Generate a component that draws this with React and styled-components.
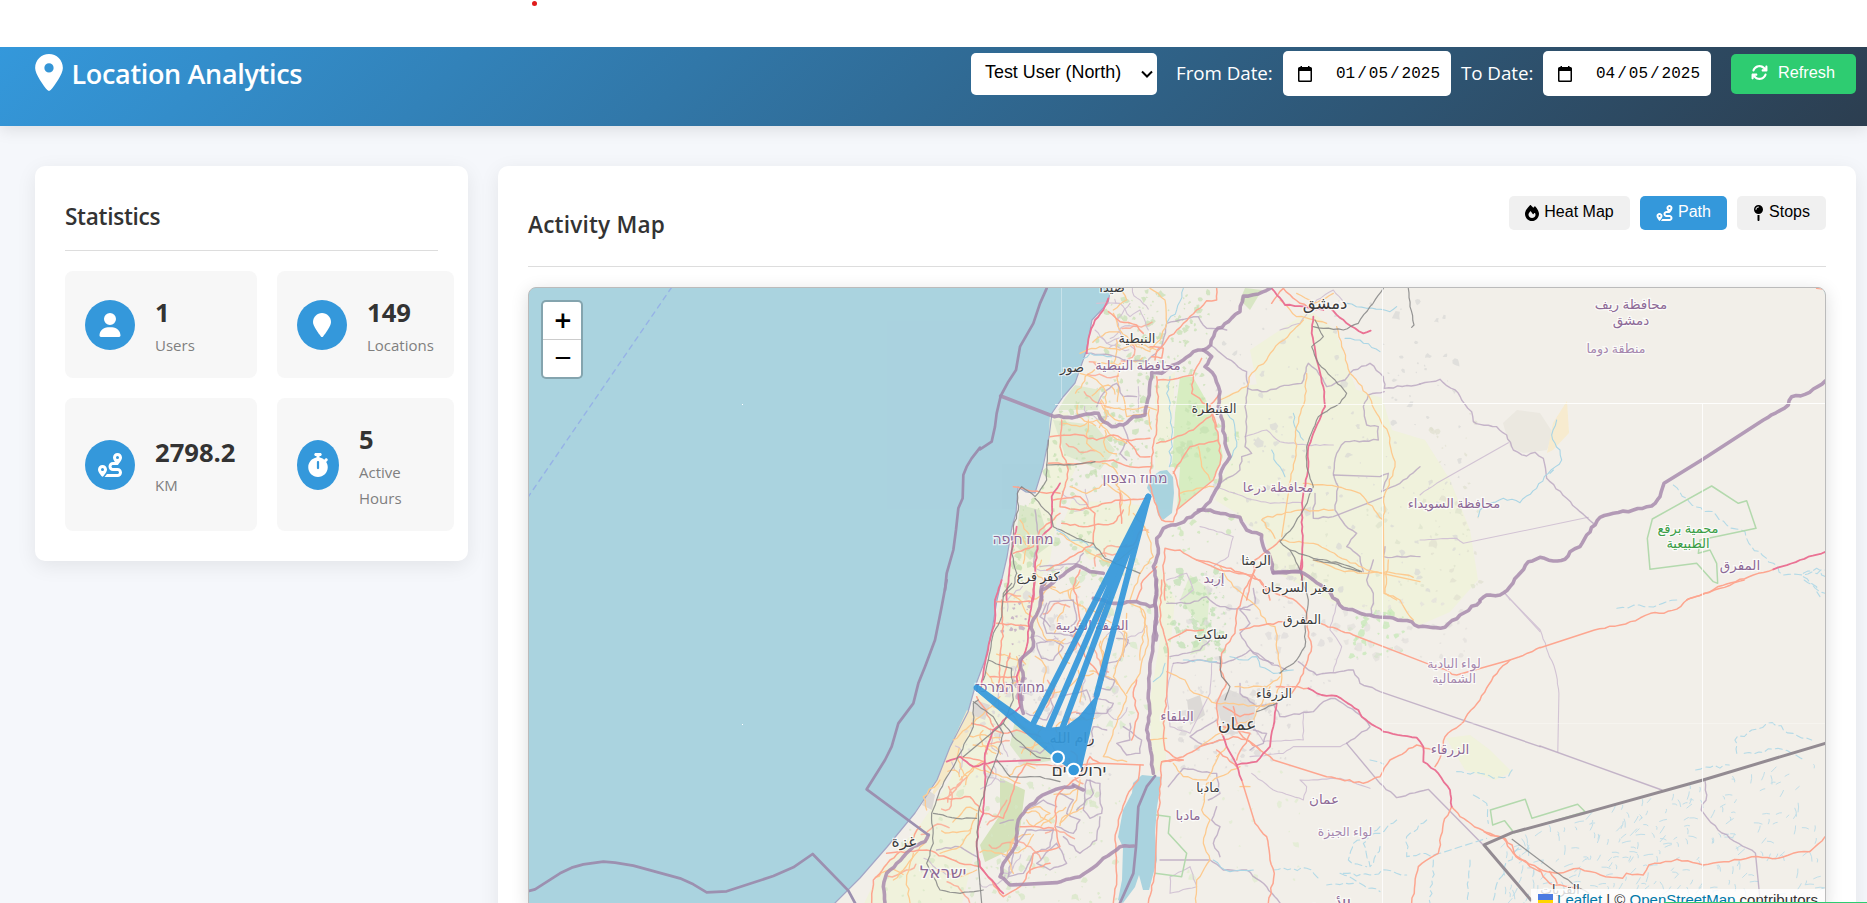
import React from 'react';
import styled, { createGlobalStyle, css } from 'styled-components';
import {
  FaLocationDot, FaLocationPin, FaUser, FaRoute, FaStopwatch, FaArrowsRotate, FaFire, FaMapPin,
} from 'react-icons/fa6';

const ui = '"Segoe UI", "Open Sans", "Noto Sans", sans-serif';
const control = 'Arial, "Liberation Sans", sans-serif';

const GlobalStyle = createGlobalStyle`
  *, *::before, *::after { box-sizing: border-box; }
  html, body { margin: 0; padding: 0; overflow: hidden; background: #f5f7fb; }
  body { font-family: ${ui}; color: #333; line-height: 1.6; }
`;

/* ---------- page frame ---------- */

const Page = styled.div`
  position: relative;
  display: flex;
  flex-direction: column;
  width: 1867px;
  height: 903px;
  overflow: hidden;
  background: #f5f7fb;
`;

const TopStrip = styled.div`
  position: relative;
  z-index: 1;
  flex: none;
  height: 47px;
  padding-left: 532px;
  background: #fff;
`;

const RecordDot = styled.div`
  width: 5px;
  height: 5px;
  margin-top: 1px;
  border-radius: 50%;
  background: #e01b1b;
`;

const Header = styled.header`
  flex: none;
  display: flex;
  align-items: center;
  justify-content: space-between;
  height: 79px;
  padding: 0 11px 26px 35px;
  color: #fff;
  background: linear-gradient(135deg, #3498db, #2c3e50);
  box-shadow: 0 4px 15px rgba(0, 0, 0, 0.1);
`;

const Brand = styled.div`
  display: flex;
  align-items: center;
  gap: 8.5px;
  svg { width: 28px; height: 37px; margin-top: -2px; }
`;

const BrandName = styled.h1`
  margin: 0;
  font-size: 27px;
  font-weight: 600;
  line-height: 40px;
  letter-spacing: -0.33px;
`;

const Controls = styled.div`
  display: flex;
  align-items: center;
`;

const SelectBox = styled.div`
  display: flex;
  align-items: center;
  justify-content: space-between;
  width: 186px;
  height: 42px;
  margin-right: 19px;
  padding: 0 4px 2px 14px;
  border-radius: 5px;
  background: #fff;
  color: #000;
  font: 17.9px ${control};
  svg { width: 12px; height: 8px; margin-top: 3px; }
`;

const FieldLabel = styled.label`
  width: ${(p) => p.$width}px;
  font-size: 18.8px;
  letter-spacing: -0.05px;
  white-space: nowrap;
`;

const DateBox = styled.div`
  display: flex;
  align-items: center;
  justify-content: space-between;
  width: 168px;
  height: 45px;
  margin-right: ${(p) => p.$after}px;
  padding: 0 11px 0 15px;
  border-radius: 5px;
  background: #fff;
  color: #000;
  font: 16px "Liberation Mono", monospace;
  svg { width: 14px; height: 16px; }
`;

const DateParts = styled.span`
  display: flex;
  gap: 2px;
`;

const RefreshButton = styled.button`
  display: flex;
  align-items: center;
  gap: 10px;
  width: 125px;
  height: 40px;
  padding: 0 20px 2px;
  border: 0;
  border-radius: 5px;
  background: #2ecc71;
  color: #fff;
  font: 16.3px ${control};
  svg { width: 17px; height: 17px; }
`;

const Main = styled.main`
  display: grid;
  grid-template-columns: 433px 1358px;
  gap: 30px;
  align-items: start;
  padding: 40px 11px 0 35px;
`;

const Card = styled.section`
  padding: 30px;
  border-radius: 10px;
  background: #fff;
  box-shadow: 0 5px 20px rgba(0, 0, 0, 0.08);
`;

const CardHead = styled.div`
  display: flex;
  justify-content: space-between;
  height: ${(p) => p.$height}px;
  margin-bottom: 20px;
  border-bottom: 1px solid #ddd;
`;

const CardTitle = styled.h2`
  margin: 0;
  font-size: 22.6px;
  font-weight: 600;
  line-height: ${(p) => p.$line}px;
  letter-spacing: ${(p) => p.$tracking}px;
`;

/* ---------- statistics ---------- */

const StatGrid = styled.div`
  display: grid;
  grid-template-columns: 192px 177px;
  grid-template-rows: 107px 133px;
  gap: 20px;
`;

const StatItem = styled.div`
  display: flex;
  align-items: center;
  gap: 20px;
  padding: 20px;
  border-radius: 8px;
  background: #f7f7f7;
`;

const StatIcon = styled.div`
  flex: none;
  display: flex;
  align-items: center;
  justify-content: center;
  width: ${(p) => p.$width || 50}px;
  height: 50px;
  border-radius: 50%;
  background: #3498db;
  color: #fff;
  svg { width: 24px; height: 24px; }
`;

const StatValue = styled.div`
  font-size: 25.6px;
  font-weight: 700;
  line-height: 41px;
  padding-top: 1px;
  margin-bottom: -1px;
`;

const StatLabel = styled.div`
  color: #7f7f7f;
  font-size: 15px;
  line-height: 26px;
`;

/* ---------- map ---------- */

const ModeButtons = styled.div`
  display: flex;
  gap: 10px;
`;

const ModeButton = styled.button`
  display: flex;
  align-items: center;
  justify-content: center;
  gap: 5px;
  width: ${(p) => p.$width}px;
  height: 34px;
  padding: 0 0 2px;
  border: 0;
  border-radius: 5px;
  background: ${(p) => (p.$active ? '#3498db' : '#f0f0f0')};
  color: ${(p) => (p.$active ? '#fff' : '#000')};
  font: 16px ${control};
  svg { height: 16px; width: ${(p) => p.$icon}px; margin-top: 2px; }
`;

const MapFrame = styled.div`
  position: relative;
  height: 624px;
  border: 1px solid #bbb;
  border-radius: 8px;
  overflow: hidden;
  background: #aad3df;
`;

const MapShadow = styled.div`
  border-radius: 8px;
  box-shadow: 0 4px 18px rgba(0, 0, 0, 0.14);
`;

const MapCanvas = styled.svg`
  display: block;
  path { fill: none; vector-effect: non-scaling-stroke; stroke-linejoin: round; stroke-linecap: round; }
`;

const strokes = {
  nation: css`stroke: #a98cae; stroke-width: 3.6; opacity: 0.85;`,
  maritime: css`stroke: #9c90b0; stroke-width: 2.7;`,
  desert: css`stroke: #938b92; stroke-width: 3;`,
  region: css`stroke: #b9a6c1; stroke-width: 1.4; opacity: 0.8;`,
  thin: css`stroke: #d2c3d4; stroke-width: 1.1;`,
  primary: css`stroke: #fda690; stroke-width: 1.5;`,
  secondary: css`stroke: #fdca8f; stroke-width: 1.3;`,
  motorway: css`stroke: #ea7294; stroke-width: 1.8;`,
  rail: css`stroke: #858585; stroke-width: 1.2; opacity: 0.85;`,
  river: css`stroke: #a9d5e5; stroke-width: 1.1;`,
  stream: css`stroke: #b9dce8; stroke-width: 1; opacity: 0.85;`,
  wadi: css`stroke: #b4dae7; stroke-width: 1.1; stroke-dasharray: 7 4;`,
  ferry: css`stroke: #96b2e6; stroke-width: 1.4; stroke-dasharray: 5 5;`,
  park: css`stroke: #b3d9ad; stroke-width: 1.5;`,
};

const Line = styled.path`${(p) => strokes[p.$kind]}`;

const Area = styled.polygon`
  fill: ${(p) => p.$fill};
  opacity: ${(p) => p.$opacity || 1};
`;

const tones = { town: '#3c3c3c', region: '#8d6996', district: '#a688ae', park: '#3a9d45' };

const PlaceName = styled.text`
  font-family: "Noto Sans", "DejaVu Sans", sans-serif;
  font-size: ${(p) => p.$size}px;
  fill: ${(p) => tones[p.$tone]};
  stroke: rgba(255, 255, 255, 0.7);
  stroke-width: 2.4px;
  paint-order: stroke;
  text-anchor: middle;
`;

const ZoomControl = styled.div`
  position: absolute;
  left: 12px;
  top: 12px;
  width: 42px;
  border: 2px solid rgba(0, 0, 0, 0.22);
  border-radius: 5px;
  background-clip: padding-box;
  background-color: #fff;
`;

const ZoomButton = styled.div`
  height: ${(p) => (p.$first ? 38 : 37)}px;
  padding-left: 2px;
  border-bottom: ${(p) => (p.$first ? '1px solid #ccc' : '0')};
  color: #000;
  font: ${(p) => (p.$first ? 'bold 23px/36px' : '23px/35px')} "DejaVu Sans", sans-serif;
  text-align: center;
`;

const Attribution = styled.div`
  position: absolute;
  right: 0;
  bottom: 0;
  display: flex;
  align-items: center;
  gap: 4px;
  height: 21px;
  padding: 0 7px;
  background: rgba(255, 255, 255, 0.8);
  color: #333;
  font: 15px/21px ${control};
  white-space: pre;
  svg { width: 15px; height: 10px; margin-top: -1px; }
`;

const MapLink = styled.span`color: #0078a8;`;

const BottomAccent = styled.div`
  position: absolute;
  right: 0;
  bottom: 0;
  width: 203px;
  height: 1px;
  background: #2ecc71;
`;

/* ---------- map geometry ---------- */

function random(seed) {
  let s = seed;
  return () => {
    s = (s * 1664525 + 1013904223) % 4294967296;
    return s / 4294967296;
  };
}

const jitter = { nation: 3, region: 3, thin: 2, primary: 3, secondary: 3.5, motorway: 2, rail: 2, river: 5, wadi: 6 };

/* Turns a list of points into a path whose segments meander slightly. */
function meander(points, kind, seed) {
  const rnd = random(seed);
  const amp = jitter[kind] || 0;
  const pts = points.trim().split(' ').map((q) => q.split(',').map(Number));
  let d = `M${pts[0]}`;
  for (let i = 1; i < pts.length; i += 1) {
    const [ax, ay] = pts[i - 1];
    const [bx, by] = pts[i];
    const len = Math.hypot(bx - ax, by - ay);
    const n = amp && len < 130 ? Math.max(1, Math.round(len / 14)) : 1;
    for (let k = 1; k <= n; k += 1) {
      const t = k / n;
      const off = k < n ? (rnd() - 0.5) * 2 * amp : 0;
      const x = ax + (bx - ax) * t - ((by - ay) / len) * off;
      const y = ay + (by - ay) * t + ((bx - ax) / len) * off;
      d += `L${x.toFixed(1)} ${y.toFixed(1)}`;
    }
  }
  return d;
}

const sheets = [
  {
    name: 'northwest sea', place: 'translate(520 270) scale(.33333)', lines: {
      ferry: ['455,52 25,680'],
      maritime: ['1380,533 1355,565 1340,590 1330,615 1328,685 1315,715 1308,780 1300,840 1280,910 1275,960'],
    },
  },
  {
    name: 'southwest sea', place: 'translate(520 580) scale(.33333)', lines: {
      maritime: ['27,933 45,928 120,880 155,863 190,853 250,845 285,848 340,857 480,895 520,913 560,937 620,934 760,888 820,862 878,822 985,932 1005,969'],
    },
  },
  {
    name: 'north', place: 'translate(980 280) scale(.33333)', lines: {
      region: [
        '692,195 740,235 800,275 803,325 860,335 900,320 965,310 985,250 1010,270 1040,320 1095,300 1120,270 1170,250 1210,290 1213,325 1320,312',
        '803,325 795,380 800,440 795,500 815,520 785,530 780,570 720,610',
        '1213,335 1165,345 1150,380 1160,435 1195,440 1195,480 1095,485 1070,520 1060,580 1075,620 1065,690 1095,735 1130,760 1100,800 1140,830 1150,875',
        '320,220 390,225 430,240 500,245 545,200 560,130 600,120 655,110 680,145 740,150',
        '1213,650 1060,710 1000,715 1005,640', '1215,800 1210,830 1320,830', '1060,585 1200,590 1225,580 1205,635 1260,610 1320,560',
        '350,380 370,340 410,310 430,350 470,350', '430,440 445,480 420,520 440,540',
        '180,860 240,855 290,850 310,820', '165,690 175,780 160,860',
      ],
      thin: [
        '795,470 860,450 900,485 980,495 1060,495', '720,625 800,655 870,670 965,668',
        '660,740 700,750 760,770 745,830 700,860', '560,900 620,880 640,930 600,960',
        '450,70 410,120 425,170 380,190 345,150', '1100,80 1060,30 1010,60 960,130 900,150',
        '475,320 475,390', '350,70 420,70 450,110 480,90 505,150',
      ],
      river: ['395,230 330,220 300,250', '570,290 560,340 572,400 575,470 568,560', '1095,175 1140,180 1200,215', '1100,70 1160,85 1230,95 1250,80',
        '875,510 890,550 915,590', '940,400 950,450 970,480', '720,390 760,420 770,500 750,540', '230,750 270,780 320,790 350,810', '560,130 590,90 610,25'],
      secondary: [
        '970,120 930,160 880,210 860,240 815,280 800,320 720,360',
        '1070,140 1085,200 1110,280 1160,340 1190,400 1225,460 1245,560 1215,640 1210,720 1212,940 1250,960',
        '980,280 975,360 950,440 945,540 925,640 905,770', '970,610 1070,620 1140,640 1210,720',
        '1060,690 960,690 850,715 845,720 885,775', '900,780 1000,790 1100,840 1160,870 1320,905',
        '510,25 555,60 560,130 540,180 510,210', '300,280 350,300 380,340 375,380 430,390 500,380 530,390',
        '325,420 320,490 370,530', '430,350 440,410 500,400', '655,500 665,560 690,600', '600,640 650,625 700,620', '270,620 320,640 380,610 420,640',
        '250,430 300,440 350,420 400,470 440,490', '460,700 500,750 520,830 480,880 450,960', '240,760 330,820 400,850 470,800', '120,720 150,770 130,850',
        '300,220 360,200 420,210 470,190 530,210', '420,25 440,60 400,90', '900,60 950,110 1040,130', '950,40 1000,70 1060,40', '400,100 420,150 470,200 510,215',
      ],
      primary: [
        '385,95 420,125 470,135 490,160', '710,25 710,60 680,62 610,130 560,180 530,215 525,240',
        '530,290 535,380 530,450 515,530 510,600 520,650 545,720 580,725 600,660 590,600 580,575', '535,300 580,298 640,285 665,235',
        '640,290 635,340 680,375 690,380 715,470 722,540 700,600 590,690', '530,490 580,475 640,450 700,400', '580,580 630,500 715,480',
        '210,470 300,465 350,480 400,465 440,480 510,475', '205,550 280,552 345,545 400,540 450,560 515,560',
        '245,420 240,500 265,570 255,620 240,680 300,690 420,660 500,655', '220,660 300,650 345,700 340,790 260,840 200,870',
        '555,960 550,870 555,805 600,810 650,840 700,850 790,880 840,900 870,960', '900,780 880,800 825,840 820,880 800,960',
        '100,820 160,800 180,750 240,700', '245,730 310,740 400,730 430,690', '420,640 425,730', '300,870 280,920 290,960', '440,480 480,530 510,530',
        '720,340 690,375 710,440', '510,200 550,205 545,235 515,230', '875,70 910,25 960,70 1010,90', '100,620 200,640 240,640', '530,860 490,900 470,960',
      ],
      motorway: ['385,55 370,90 345,120 330,160 320,220', '875,25 915,75 975,80 1030,90', '1050,85 1100,130 1150,160 1172,152',
        '1000,110 995,160 1010,240 1030,320 1035,380 1000,460 985,500 985,560 970,640 965,700 968,780 965,900', '240,610 215,650 215,740 175,780 165,860 160,960', '110,740 90,840 80,960'],
      rail: ['1210,25 1170,80 1135,130 1090,150 1030,145 1000,140', '1285,25 1290,80 1302,135 1295,142',
        '1005,120 1030,170 995,200 1015,250 1065,300 1100,340 1080,370 1015,410 980,500 980,560 1000,620 975,680 940,740 900,785 930,810 1000,835 1080,850 1145,875',
        '205,480 200,555 280,555 345,545', '200,555 200,600 165,650 125,620 112,640 115,690 100,740 95,820 110,880 100,920 70,950', '165,655 215,710 220,740 290,775 340,790 375,835 420,855 480,880', '930,810 960,870'],
      nation: [
        '870,25 835,42 790,48 780,95 745,125 705,155 692,195 670,210 640,215 610,240 565,265 545,280 515,278 508,330 500,375 495,405 460,410 430,435 395,440 370,425 355,400 320,402 290,410 250,412 210,405 62,348',
        '670,210 695,230 675,260 705,290 720,335 715,380 730,440 735,490 750,530 725,570 715,620 690,665 655,695 600,730 550,745 530,775 535,820 520,860 530,900 527,960 528,1080',
        '655,690 690,690 720,700 780,712 800,750 845,765 850,800 870,830 880,878',
        '185,960 185,930 210,915 250,885 290,855 330,875 370,880',
      ],
      maritime: ['200,25 180,70 160,130 120,200 108,270 85,305 62,348 50,400 45,440 35,485 0,508'],
    },
  },
  {
    name: 'northeast', place: 'translate(1420 280) scale(.33333)', lines: {
      thin: ['265,488 50,610 0,645', '505,712 130,790 110,775 0,780', '255,940 270,960'],
      river: ['410,420 395,465 420,510 425,540 385,580 350,625 300,668 250,655 180,690 175,710', '390,580 400,570'],
      wadi: ['760,615 800,655 850,695 880,695 920,735 975,755 995,800 1060,850 1090,885 1150,885 1217,870', '1150,890 1190,920 1200,950', '1150,880 1190,865 1217,890'],
      park: ['697,717 875,618 955,670 980,662 1008,745 840,780 835,820 870,810 890,850 893,910 880,905 830,850 690,868 682,775 697,717'],
      primary: ['800,960 920,912 1000,885 1060,868', '1190,25 1217,30'],
      motorway: ['1060,868 1140,840 1217,815'],
      region: ['0,312 60,298 115,340 125,360 155,395 160,425 180,433 230,440 260,465 280,510 320,528 345,517 370,535 380,595 440,655 480,695 520,730'],
      nation: ['180,960 200,945 240,945 270,920 325,845 360,832 400,843 435,838 450,815 480,800 500,765 540,712 580,700 640,690 695,678 720,650 732,610 845,540 1030,420 1105,375 1115,350 1155,343 1217,302'],
    },
  },
  {
    name: 'centre', place: 'translate(860 580) scale(.33333)', lines: {
      region: [
        '570,65 640,60 650,120 620,150 640,170 600,160 560,160 550,130 570,65', '530,190 580,180 610,200 580,240 545,235 530,190',
        '680,600 720,610 725,700 690,715 670,690 680,600', '500,750 580,750 570,800 520,820 490,880 445,890 460,810 500,750', '590,790 620,850 570,870 530,850 590,790',
        '720,710 710,780 660,820 610,770', '790,440 845,480 840,520 800,525 770,490 810,480 810,430', '770,175 805,180 780,240 740,250 735,290 765,300 750,330 715,320',
        '490,340 560,330 580,380 560,420 500,400', '600,350 680,330 700,400 650,400', '700,400 740,400 760,370 700,350', '600,640 640,660 620,700 660,720 640,760 590,740', '500,690 550,660 590,680',
        '650,690 700,640 690,600', '740,450 700,440 690,500', '230,810 300,800 350,830', '420,730 460,720', '560,70 540,110 570,140', '480,500 540,520 560,500',
      ],
      secondary: ['800,100 790,200 760,290 800,350 760,450 730,530 800,545', '740,120 800,160 790,230', '160,820 140,900 150,969', '200,780 130,870 100,900', '420,350 340,430 280,480',
        '500,690 540,680 570,700 520,740 500,720', '550,350 610,330 660,290 700,280', '520,400 560,370 590,300', '300,600 340,560 400,580 480,610', '240,820 300,800 330,760 350,700',
        '440,320 480,300 470,230', '550,60 530,110 560,180 610,190', '660,600 650,660 630,700 600,730', '470,760 440,830 460,880', '200,690 190,650 240,600', '230,870 300,890 350,870',
        '540,10 600,40 660,20', '810,70 850,90 865,180 840,280 800,340', '400,380 450,400 500,450'],
      primary: ['410,65 520,65', '410,130 510,140', '425,60 430,140 420,240 415,320', '450,220 430,300 440,340', '335,430 430,460 470,450 540,470', '230,660 330,650 370,700 430,715 470,600 500,550 590,560 720,550 850,555',
        '35,969 40,900 90,840 150,790 180,740', '80,820 200,810 300,850 360,860 430,950 480,920 510,870 570,850', '840,555 835,600 800,650 775,720 765,780 770,900 760,969', '650,60 660,120 640,170 690,250 730,300',
        '905,0 900,120 925,220 920,350 910,430 915,510 940,530 970,540 905,545 900,640 890,750 885,880 865,969', '640,600 590,650 585,740 600,800 520,820 510,880', '390,290 470,290', '400,440 370,380 350,350',
        '830,300 820,350 835,400 815,480', '720,550 690,530 660,590 630,610', '300,530 370,545 400,580', '480,740 580,745'],
      motorway: ['425,0 405,60 405,120 390,180 375,250 360,330', '525,0 510,100 500,200 470,290 480,380 400,450 375,520 375,620 370,700 355,740 350,800 360,860 430,940', '260,545 300,530 340,560 400,545 540,540'],
      rail: ['455,10 430,40 425,110 400,160 385,240 370,300', '355,360 340,370 340,440 300,520 240,630 215,700 220,790 200,850 240,930 300,940 370,930', '385,240 420,255 455,265 460,360 430,430 310,530',
        '340,365 400,410 430,460 410,530 380,610 355,700 350,800 365,969', '430,430 460,470 530,530 590,540', '220,700 290,715 350,715', '410,540 450,590 540,590 600,605'],
      nation: ['205,765 195,785 160,800 110,850 80,880 70,920 75,969', '560,0 545,20 540,80 515,130 520,200 480,240 490,290 480,340 490,400',
        '640,620 600,625 560,640 510,675 475,720 465,800 430,850 420,890 450,915 590,908 660,890 720,845 780,800 822,798', '670,630 640,615',
        '888,0 885,60 890,110 878,200 870,250 865,340 870,400 860,450 870,500 880,580', '700,55 760,70 830,65 870,80 885,75'],
      maritime: ['260,0 245,80 225,180 195,260 175,310 160,370 115,430 95,500 75,540 20,628 205,765', '885,588 860,620 835,680 828,800 820,880 780,969'],
    },
  },
  {
    name: 'jordan', place: 'translate(1140 560) scale(.33333)', lines: {
      thin: ['330,590 430,580 460,560 600,560 620,550', '490,460 490,540 370,545 340,500', '335,640 400,690 490,720 500,680 480,660 600,655 690,685', '1095,100 1200,215',
        '590,130 570,210 605,260 580,335', '215,310 210,400 150,520 90,500 80,400 100,310', '150,920 170,980 90,1000 90,950 150,920'],
      region: ['475,305 530,345 640,330 660,370 720,395 1200,560', '620,550 690,500 660,465 585,415 550,425 520,455 420,470 400,430', '620,550 720,670 770,713 865,688 1030,855',
        '100,310 180,300 240,310 280,300 330,270 400,310', '340,85 345,130 300,150 330,190 300,220 340,280 370,300 440,330', '60,900 210,900 250,930 320,930 380,980 420,1029', '230,740 215,780 240,800 220,850 240,890',
        '700,0 680,60 700,100 695,160', '85,680 130,625 230,640 240,700 205,720', '80,130 150,130 200,110 240,140 330,150', '230,480 150,530 190,555 240,540', '90,290 180,270 210,240', '300,370 300,400 350,440 400,430', '340,510 380,520 370,550 330,570'],
      river: ['270,290 310,300 350,290 360,320 400,340 460,330', '40,365 60,350 75,310', '130,300 230,305', '220,900 270,935 340,930'],
      wadi: ['950,635 1020,640 1060,655 1105,650 1120,625', '770,780 720,820 640,850 625,900 680,920', '860,780 800,830 800,890 900,880 1040,835', '720,800 670,850 690,920 720,860',
        '400,930 500,925 540,960', '600,940 660,970 720,995', '610,940 690,945 740,930 800,945', '690,600 730,612', '1000,705 1040,730 1045,790', '880,900 870,1029', '990,900 985,1029', '640,970 560,975'],
      secondary: ['240,20 280,80 350,140 380,190 405,200 415,280 425,340 420,380 410,400', '100,610 130,650 200,660 240,580', '300,620 200,670 185,750 210,780 190,850 210,900 170,960 168,1029', '285,380 380,380 420,350',
        '390,380 360,440 330,490', '520,0 600,30 680,40 740,35 820,52', '745,0 735,100 780,120 820,180', '80,335 135,360 150,390 230,430 280,430 370,440 410,430', '30,540 80,535', '0,140 15,190 0,300', '180,560 260,500 330,480', '300,680 330,680', '230,590 260,560'],
      primary: ['305,660 345,790 380,830 390,900 403,940 385,1029', '410,380 460,380 505,385', '540,190 640,225 860,310 950,345 1110,300 1200,262', '1110,300 1060,350 1020,420 960,495 915,530 905,580 885,620',
        '880,570 830,555 750,600 720,650 670,670 560,650 400,600 330,545 280,530 180,560 130,590 65,605', '935,740 960,770 1040,820 1090,835 1120,880 1170,920 1200,935', '935,740 910,790 895,880 835,920 825,970 815,1029',
        '345,30 310,100 290,160 285,220 245,280 240,330 260,370 230,430 235,500 250,530', '170,0 240,30 340,45 385,90 470,125 500,160 505,230 515,260 490,340 455,400', '300,210 370,195 430,185', '85,240 140,210 190,210', '250,500 330,520 290,600', '230,570 290,620', '280,440 300,520 360,570', '340,460 300,470 250,440'],
      motorway: ['485,0 480,30', '410,430 400,500 390,560 350,605 290,615 260,560 250,530', '290,615 305,660', '505,385 545,405 590,408 655,450 665,470 730,515 830,533 850,560 850,605 885,630 930,690 935,740'],
      rail: ['480,35 505,120 495,200 495,260 470,300 420,340', '520,0 580,10 660,35', '410,430 350,455', '240,290 245,350 270,380 255,420'],
      park: ['50,765 90,770 85,820 140,880 125,950 45,940'],
      nation: ['400,38 480,35 520,60 560,90 610,145 690,165 815,185 835,200 915,202 960,165 1020,125'],
    },
  },
  {
    name: 'southeast', place: 'translate(1280 580) scale(.37439 .33333)', lines: {
      thin: ['600,40 695,150 735,270 745,340 742,515'],
      region: ['694,498 1020,630', '1135,600 1140,645 1125,690 1170,750 1270,820 1283,969'],
      park: ['625,758 600,722 568,735 562,690 655,658 673,715 795,673 815,695 625,758'],
      wadi: ['900,85 960,75 1010,75 1060,60', '1220,520 1215,480 1260,450 1315,428 1370,460 1420,480', '1240,520 1330,505 1400,540', '1110,570 1200,555', '570,960 600,860 640,800', '1400,0 1430,25 1456,40'],
      primary: ['695,203 840,150 950,122 990,100 1025,100 1070,80 1090,57 1160,30 1240,0',
        '545,755 590,770 620,795 630,830 690,865 740,880 800,865 870,890 915,895 925,880 970,885 985,855 1060,838 1130,855 1200,845 1260,830 1330,835 1370,820 1415,815 1456,770', '690,865 720,910 790,925', '720,875 740,910'],
      rail: ['620,778 735,875 825,940'],
      desert: ['1456,490 1130,600 810,700 620,758 545,795 670,960'],
    },
  },
];

const drawOrder = ['thin', 'region', 'river', 'wadi', 'park', 'secondary', 'primary', 'motorway', 'rail', 'nation', 'maritime', 'desert', 'ferry'];

const nationJoin = 'M1273.3 572.7L1283 571.7L1300 571.7';

const coast = [
  [1111, 287], [1108, 303], [1092, 320], [1086, 352], [1075, 383], [1063, 397], [1052, 413], [1049, 437], [1043, 467],
  [1035, 493], [1026, 492], [1018, 487], [1016, 513], [1012, 527], [1007, 557], [1000, 587], [997, 600], [992, 630], [985, 660], [975, 687],
  [968, 712], [950, 747], [937, 780], [915, 813], [887, 847], [860, 878], [835, 903],
];

function coastX(y) {
  for (let i = 1; i < coast.length; i += 1) {
    const [x0, y0] = coast[i - 1];
    const [x1, y1] = coast[i];
    if (y >= Math.min(y0, y1) && y <= Math.max(y0, y1) && y0 !== y1) return x0 + ((x1 - x0) * (y - y0)) / (y1 - y0);
  }
  return 835;
}

const landPoints = `${coast.map((c) => c.join(',')).join(' ')} 835,915 1830,915 1830,287`;

const areas = [
  ['#f0f2dc', '1050,415 1068,412 1075,470 1060,500 1050,560 1040,580 1035,640 1020,700 1000,740 985,790 975,850 960,912 860,912 880,870 920,825 950,780 970,720 990,650 1003,590 1018,520 1046,480'],
  ['#f0f2dc', '1215,400 1250,385 1320,378 1382,398 1392,430 1425,440 1450,480 1470,530 1478,580 1450,612 1420,625 1380,612 1340,606 1310,590 1275,572 1265,540 1235,512 1215,500 1230,455'],
  ['#f0f2dc', '1310,310 1335,330 1360,400 1330,420 1260,400 1250,350'],
  ['#f0f2dc', '1155,385 1175,372 1172,430 1168,470 1155,470'],
  ['#f0f2dc', '1156,560 1175,600 1165,700 1166,760 1152,780 1150,700 1160,640'],
  ['#f0f2dc', '1072,500 1140,505 1130,550 1090,560 1060,530'],
  ['#f0f2dc', '1446,738 1470,735 1490,750 1512,772 1495,780 1465,770'],
  ['#d7edc1', '1180,377 1193,377 1210,407 1219,437 1223,457 1213,480 1177,510 1180,467 1172,467 1175,413'],
  ['#dfe9cf', '1075,385 1100,390 1098,410 1058,410 1065,398'],
  ['#dfe9cf', '1053,420 1095,425 1115,450 1100,470 1065,455'],
  ['#dae7c8', '1020,505 1040,510 1050,545 1030,560 1015,545'],
  ['#d4e2ba', '1000,778 1025,790 1020,830 1010,850 985,862 980,845 1000,815'],
  ['#dbe7ca', '1015,720 1040,735 1055,760 1025,765 1010,745'],
  ['#e0eed0', '1190,575 1210,590 1205,650 1190,655 1200,625 1180,600'],
  ['#d8e6c4', '1245,288 1262,290 1250,310 1240,300'],
  ['#ebe8e0', '1503,423 1517,410 1540,413 1553,433 1547,450 1523,453 1510,447'],
  ['#f7eccf', '1567,401 1569,433 1553,450 1547,453 1553,423'],
  ['#f5e9c8', '967,710 978,715 960,750 945,780 930,800 937,780 950,747'],
  ['#dfdcd9', '1215,700 1230,690 1255,700 1255,730 1225,735'],
  ['#dcd9d6', '1187,700 1200,695 1205,715 1190,725'],
  ['#dcd9d6', '928,790 935,795 932,810 922,805'],
  ['#dcd9d6', '975,700 990,705 985,720 972,715'],
  ['#aad3df', '1160,471 1167,470 1173,477 1174,493 1172,513 1163,520 1158,515 1155,500 1147,488 1150,478'],
  ['#aad3df', '1142,775 1162,777 1157,807 1155,833 1157,860 1149,890 1143,890 1139,875 1135,887 1123,903 1118,900 1122,880 1123,847 1118,837 1123,810 1132,793 1133,783'],
];

/* Small vegetation and settlement patches, spread by region. */
const patchRegions = [
  [1050, 290, 1210, 470, 300, '#c6e0b2'], [1000, 470, 1110, 590, 150, '#c6e0b2'], [1210, 300, 1460, 600, 150, '#d9d9d6'], [1170, 420, 1240, 570, 40, '#c9e5b4'],
  [960, 590, 1120, 780, 180, '#dcd8d8'], [880, 780, 1120, 903, 130, '#d6e7c3'], [1165, 570, 1225, 660, 120, '#bfe0b2'], [1000, 600, 1030, 700, 30, '#b99fbd'],
  [1180, 560, 1330, 720, 90, '#dedcda'], [1350, 610, 1405, 660, 40, '#c3e8b4'], [1330, 600, 1470, 660, 60, '#e3e0dc'], [1180, 680, 1290, 770, 90, '#dbd9d7'],
  [1250, 500, 1480, 590, 50, '#dde2cc'], [1430, 410, 1480, 600, 35, '#e0e0cf'], [1080, 560, 1150, 740, 60, '#d6e9c8'], [1180, 770, 1300, 890, 30, '#dfeccf'],
];

const patches = (() => {
  const rnd = random(77);
  const out = [];
  patchRegions.forEach(([x0, y0, x1, y1, n, fill]) => {
    for (let i = 0; i < n; i += 1) {
      const x = x0 + rnd() * (x1 - x0);
      const y = y0 + rnd() * (y1 - y0);
      const r = 0.7 + rnd() * rnd() * 4;
      if (x > coastX(y) + 5) {
        const pts = [];
        for (let k = 0; k < 7; k += 1) {
          const a = (k / 7) * Math.PI * 2;
          const q = r * (0.5 + rnd());
          pts.push(`${(x + Math.cos(a) * q).toFixed(1)},${(y + Math.sin(a) * q).toFixed(1)}`);
        }
        out.push([fill, pts.join(' ')]);
      }
    }
  });
  return out;
})();

/* Seasonal streams in the desert south of the border. */
const streams = (() => {
  const rnd = random(9);
  let out = '';
  for (let i = 0; i < 260; i += 1) {
    const x = 1500 + rnd() * 320;
    const border = 845 - ((x - 1484) * 101) / 342;
    const y = border + 4 + rnd() * (903 - border);
    const a = rnd() * 2.4 - 0.3;
    const l = 3 + rnd() * 6;
    out += `M${x.toFixed(1)} ${y.toFixed(1)}q${(Math.cos(a) * l * 0.5 + 1).toFixed(1)} ${(-Math.sin(a) * l * 0.5 - 1).toFixed(1)} ${(Math.cos(a) * l).toFixed(1)} ${(-Math.sin(a) * l).toFixed(1)}`;
  }
  return out;
})();

/* Local roads filling in the populated belt. */
const localRoads = (() => {
  const rnd = random(31);
  const out = { secondary: '', primary: '', thin: '' };
  for (let i = 0; i < 120; i += 1) {
    let y = 295 + rnd() * 600;
    let x = coastX(y) + 8 + rnd() * Math.min(150, 1165 - coastX(y));
    let a = rnd() * 6.28;
    const kind = i % 4 === 0 ? 'primary' : i % 4 === 1 ? 'thin' : 'secondary';
    let d = `M${x.toFixed(1)} ${y.toFixed(1)}`;
    for (let k = 0; k < 8; k += 1) {
      a += (rnd() - 0.5) * 1.5;
      x += Math.cos(a) * 4;
      y += Math.sin(a) * 4;
      if (x < coastX(y) + 4 || x > 1150) break;
      d += `L${x.toFixed(1)} ${y.toFixed(1)}`;
    }
    out[kind] += d;
  }
  return out;
})();

const places = [
  ['صيدا', 1112, 292, 13, 'town'], ['دمشق', 1325, 309, 16.5, 'town'], ['النبطية', 1137, 343, 13, 'town'], ['محافظة النبطية', 1138, 370, 13.3, 'region'],
  ['صور', 1072, 372, 13, 'town'], ['القنيطرة', 1214, 413, 12.5, 'town'], ['מחוז הצפון', 1135, 483, 14, 'region'], ['محافظة درعا', 1278, 492, 13, 'region'],
  ['מחוז חיפה', 1023, 544, 14, 'region'], ['الرمثا', 1256, 565, 13, 'town'], ['إربد', 1214, 583, 13.5, 'region'], ['مغير السرحان', 1298, 592, 12.5, 'town'],
  ['كفر قرع', 1038, 581, 12.5, 'town'], ['محافظة ريف', 1631, 309, 13.5, 'region'], ['دمشق', 1631, 325, 13.5, 'region'], ['منطقة دوما', 1616, 353, 12.5, 'district'],
  ['محافظة السويداء', 1454, 508, 13, 'region'], ['محمية برقع', 1688, 533, 13, 'park'], ['الطبيعية', 1688, 548, 13, 'park'], ['المفرق', 1740, 570, 13.5, 'region'],
  ['الضفة الغربية', 1092, 630, 13.3, 'region'], ['ساكب', 1211, 639, 13, 'town'], ['المفرق', 1302, 624, 12.8, 'town'], ['لواء البادية', 1454, 668, 12.5, 'district'],
  ['الشمالية', 1454, 683, 12.5, 'district'], ['الزرقاء', 1274, 698, 12.5, 'town'], ['البلقاء', 1177, 721, 13.5, 'region'], ['عمان', 1237, 730, 17.5, 'town'],
  ['الزرقاء', 1450, 754, 13.5, 'region'], ['مادبا', 1208, 792, 12.5, 'town'], ['عمان', 1324, 804, 13.5, 'region'], ['مادبا', 1188, 820, 13.5, 'region'],
  ['لواء الجيزة', 1345, 836, 12.3, 'district'], ['الأردن', 1330, 912, 17, 'region'], ['القريات', 1560, 894, 12.5, 'town'], ['غزة', 904, 847, 15.5, 'town'],
  ['ישראל', 943, 878, 17, 'region'], ['ירושלים', 1079, 776, 17, 'town'], ['رام الله', 1072, 743, 14.5, 'town'], ['מחוז המרכז', 1010, 692, 14, 'region'],
];

function ActivityMap() {
  return (
    <MapCanvas width="1296" height="622" viewBox="529 288 1296 622">
      <Area $fill="#f2efe9" points={landPoints} />
      {areas.map(([fill, pts]) => <Area key={pts} $fill={fill} points={pts} />)}
      {patches.map(([fill, pts], i) => <Area key={i} $fill={fill} $opacity={0.7} points={pts} />)}
      <Line $kind="thin" d={localRoads.thin} />
      <Line $kind="secondary" d={localRoads.secondary} />
      <Line $kind="primary" d={localRoads.primary} opacity="0.8" />
      <Line $kind="stream" d={streams} />
      <path d={`M${coast.map((c) => c.join(' ')).join('L')}`} stroke="#a2a6c6" strokeWidth="1.2" />
      {drawOrder.map((kind) => sheets.map((sheet, n) => (
        <g key={kind + sheet.name} transform={sheet.place}>
          {(sheet.lines[kind] || []).map((pts, i) => (
            <Line key={pts} $kind={kind} d={meander(pts, kind, n * 100 + i + 1)} />
          ))}
        </g>
      )))}
      <Line $kind="nation" d={nationJoin} />
      <g fill="#fff">
        <rect x="1382" y="288" width="1" height="620" opacity="0.75" />
        <rect x="1702" y="404" width="1" height="500" opacity="0.8" />
        <rect x="1382" y="403" width="444" height="1" opacity="0.9" />
        <rect x="1055" y="404" width="327" height="1" opacity="0.7" />
        <rect x="1061" y="288" width="1" height="110" opacity="0.35" />
        <rect x="1382" y="723" width="444" height="1" opacity="0.3" />
        <rect x="742" y="404" width="1" height="1" />
        <rect x="742" y="724" width="1" height="1" />
      </g>
      {places.map(([name, x, y, size, tone]) => (
        <PlaceName key={name + x} x={x} y={y} $size={size} $tone={tone}>{name}</PlaceName>
      ))}
      <g transform="translate(860 580) scale(.33333)" stroke="#3498db" strokeWidth="18" strokeLinejoin="round" strokeLinecap="round" opacity="0.92">
        <polyline fill="none" points="515,440 865,-250 563,450" />
        <polyline fill="none" points="607,445 865,-250 710,345" />
        <polyline fill="none" points="350,323 515,450" />
        <polygon fill="#3498db" strokeWidth="8" points="355,320 515,433 560,448 620,442 660,412 712,348 662,562 640,570 593,536 348,328" />
      </g>
      <g fill="#3498db" stroke="#fff" strokeWidth="2">
        <circle cx="1057.7" cy="757.7" r="6.3" />
        <circle cx="1073.7" cy="770" r="6.3" />
      </g>
    </MapCanvas>
  );
}

function CalendarIcon() {
  return (
    <svg viewBox="0 0 14 16">
      <path d="M1.500 1H2.500V0H4v1h6V0h1.500v1h1A1.500 1.500 0 0 1 14 2.500v12a1.500 1.500 0 0 1-1.500 1.500h-11A1.500 1.500 0 0 1 0 14.500v-12A1.500 1.500 0 0 1 1.500 1zM1.500 5v9.500h11V5z" fillRule="evenodd" />
    </svg>
  );
}

function DateField({ parts, after }) {
  return (
    <DateBox $after={after}>
      <CalendarIcon />
      <DateParts>
        <span>{parts[0]}</span><span>/</span><span>{parts[1]}</span><span>/</span><span>{parts[2]}</span>
      </DateParts>
    </DateBox>
  );
}

const stats = [
  { value: '1', label: 'Users', icon: <FaUser /> },
  { value: '149', label: 'Locations', icon: <FaLocationPin /> },
  { value: '2798.2', label: 'KM', icon: <FaRoute /> },
  { value: '5', label: 'Active Hours', icon: <FaStopwatch />, width: 42 },
];

export default function App() {
  return (
    <Page>
      <GlobalStyle />
      <TopStrip><RecordDot /></TopStrip>
      <Header>
        <Brand>
          <FaLocationDot />
          <BrandName>Location Analytics</BrandName>
        </Brand>
        <Controls>
          <SelectBox>
            Test User (North)
            <svg viewBox="0 0 12 8"><path d="M1 1.500l5 5 5-5" fill="none" stroke="#000" strokeWidth="2" /></svg>
          </SelectBox>
          <FieldLabel $width={107}>From Date:</FieldLabel>
          <DateField parts={['01', '05', '2025']} after={10} />
          <FieldLabel $width={82}>To Date:</FieldLabel>
          <DateField parts={['04', '05', '2025']} after={20} />
          <RefreshButton><FaArrowsRotate />Refresh</RefreshButton>
        </Controls>
      </Header>
      <Main>
        <Card>
          <CardHead $height={55}><CardTitle $line={41} $tracking={-0.3}>Statistics</CardTitle></CardHead>
          <StatGrid>
            {stats.map((s) => (
              <StatItem key={s.label}>
                <StatIcon $width={s.width}>{s.icon}</StatIcon>
                <div>
                  <StatValue>{s.value}</StatValue>
                  <StatLabel>{s.label}</StatLabel>
                </div>
              </StatItem>
            ))}
          </StatGrid>
        </Card>
        <Card>
          <CardHead $height={71}>
            <CardTitle $line={57} $tracking={0.2}>Activity Map</CardTitle>
            <ModeButtons>
              <ModeButton $width={121} $icon={14}><FaFire />Heat Map</ModeButton>
              <ModeButton $width={87} $icon={17} $active><FaRoute />Path</ModeButton>
              <ModeButton $width={89} $icon={11}><FaMapPin />Stops</ModeButton>
            </ModeButtons>
          </CardHead>
          <MapShadow>
            <MapFrame>
              <ActivityMap />
              <ZoomControl>
                <ZoomButton $first>+</ZoomButton>
                <ZoomButton>−</ZoomButton>
              </ZoomControl>
              <Attribution>
                <svg viewBox="0 0 15 10"><rect width="15" height="7" fill="#4c7be1" /><rect y="6" width="15" height="4" fill="#ffd500" /></svg>
                <span><MapLink>Leaflet</MapLink> | © <MapLink>OpenStreetMap</MapLink> contributors</span>
              </Attribution>
            </MapFrame>
          </MapShadow>
        </Card>
      </Main>
      <BottomAccent />
    </Page>
  );
}
